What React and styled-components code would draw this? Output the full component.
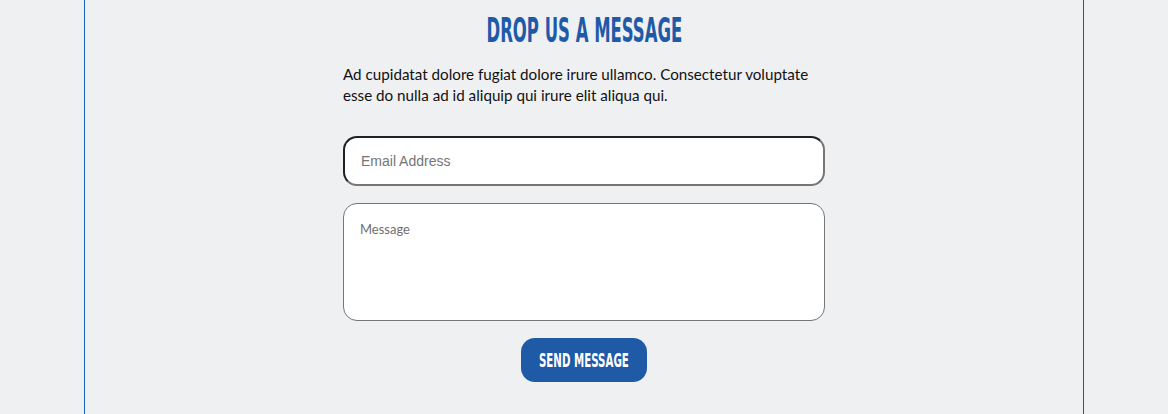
import React from "react";
import styled, { createGlobalStyle } from "styled-components";

const GlobalStyle = createGlobalStyle`
  body {
    margin: 0;
    background-color: #eff0f2;
  }
`;

const Page = styled.div`
  width: 1000px;
  min-height: 414px;
  margin: 0 auto;
  box-sizing: border-box;
  border-left: 1px solid #1f5fbf;
  border-right: 1px solid #1f5a9f;
  display: flex;
  justify-content: center;
`;

const ContactSection = styled.section`
  width: 482px;
  padding-top: 13px;
  display: flex;
  flex-direction: column;
  align-items: center;
`;

// condensed display face, squeezed to match the headline font
const Condensed = styled.span`
  display: inline-block;
  white-space: nowrap;
  transform: scaleX(${(props) => props.squeeze});
  transform-origin: center;
`;

const Title = styled.h2`
  margin: 0;
  font-family: "DejaVu Sans Condensed", "DejaVu Sans", sans-serif;
  font-weight: bold;
  font-size: 33px;
  line-height: 36px;
  color: #1f5aa8;
  text-transform: uppercase;
  text-align: center;
`;

const Intro = styled.p`
  margin: 15px 0 0;
  width: 100%;
  font-family: Lato, "Open Sans", sans-serif;
  font-size: 15.2px;
  line-height: 21px;
  color: #111;
`;

const Form = styled.form`
  width: 100%;
  margin-top: 30px;
  display: flex;
  flex-direction: column;
  align-items: center;
  gap: 17px;
`;

const EmailInput = styled.input`
  width: 100%;
  height: 50px;
  box-sizing: border-box;
  padding: 0 16px;
  border: 2px inset #767676;
  border-radius: 14px;
  background: #fff;
  font-family: "Liberation Sans", Arial, sans-serif;
  font-size: 14px;
  &::placeholder {
    color: #757575;
  }
`;

const MessageInput = styled.textarea`
  width: 100%;
  height: 118px;
  box-sizing: border-box;
  padding: 17px 16px;
  border: 1px solid #767676;
  border-radius: 14px;
  background: #fff;
  resize: none;
  font-family: Lato, "Open Sans", sans-serif;
  font-size: 13px;
  &::placeholder {
    color: #6f6f6f;
  }
`;

const SendButton = styled.button`
  width: 126px;
  height: 44px;
  padding: 0;
  border: none;
  border-radius: 14px;
  background-color: #1f5aa6;
  color: #fff;
  font-family: "DejaVu Sans Condensed", "DejaVu Sans", sans-serif;
  font-weight: bold;
  font-size: 19px;
  text-transform: uppercase;
  cursor: pointer;
  display: flex;
  align-items: center;
  justify-content: center;
  overflow: hidden;
`;

const App = () => {
  return (
    <>
      <GlobalStyle />
      <Page>
        <ContactSection>
          <Title>
            <Condensed squeeze={0.555}>Drop us a message</Condensed>
          </Title>
          <Intro>
            Ad cupidatat dolore fugiat dolore irure ullamco. Consectetur
            voluptate esse do nulla ad id aliquip qui irure elit aliqua qui.
          </Intro>
          <Form onSubmit={(e) => e.preventDefault()}>
            <EmailInput type="email" placeholder="Email Address" />
            <MessageInput placeholder="Message" />
            <SendButton type="submit">
              <Condensed squeeze={0.6}>Send message</Condensed>
            </SendButton>
          </Form>
        </ContactSection>
      </Page>
    </>
  );
};

export default App;
